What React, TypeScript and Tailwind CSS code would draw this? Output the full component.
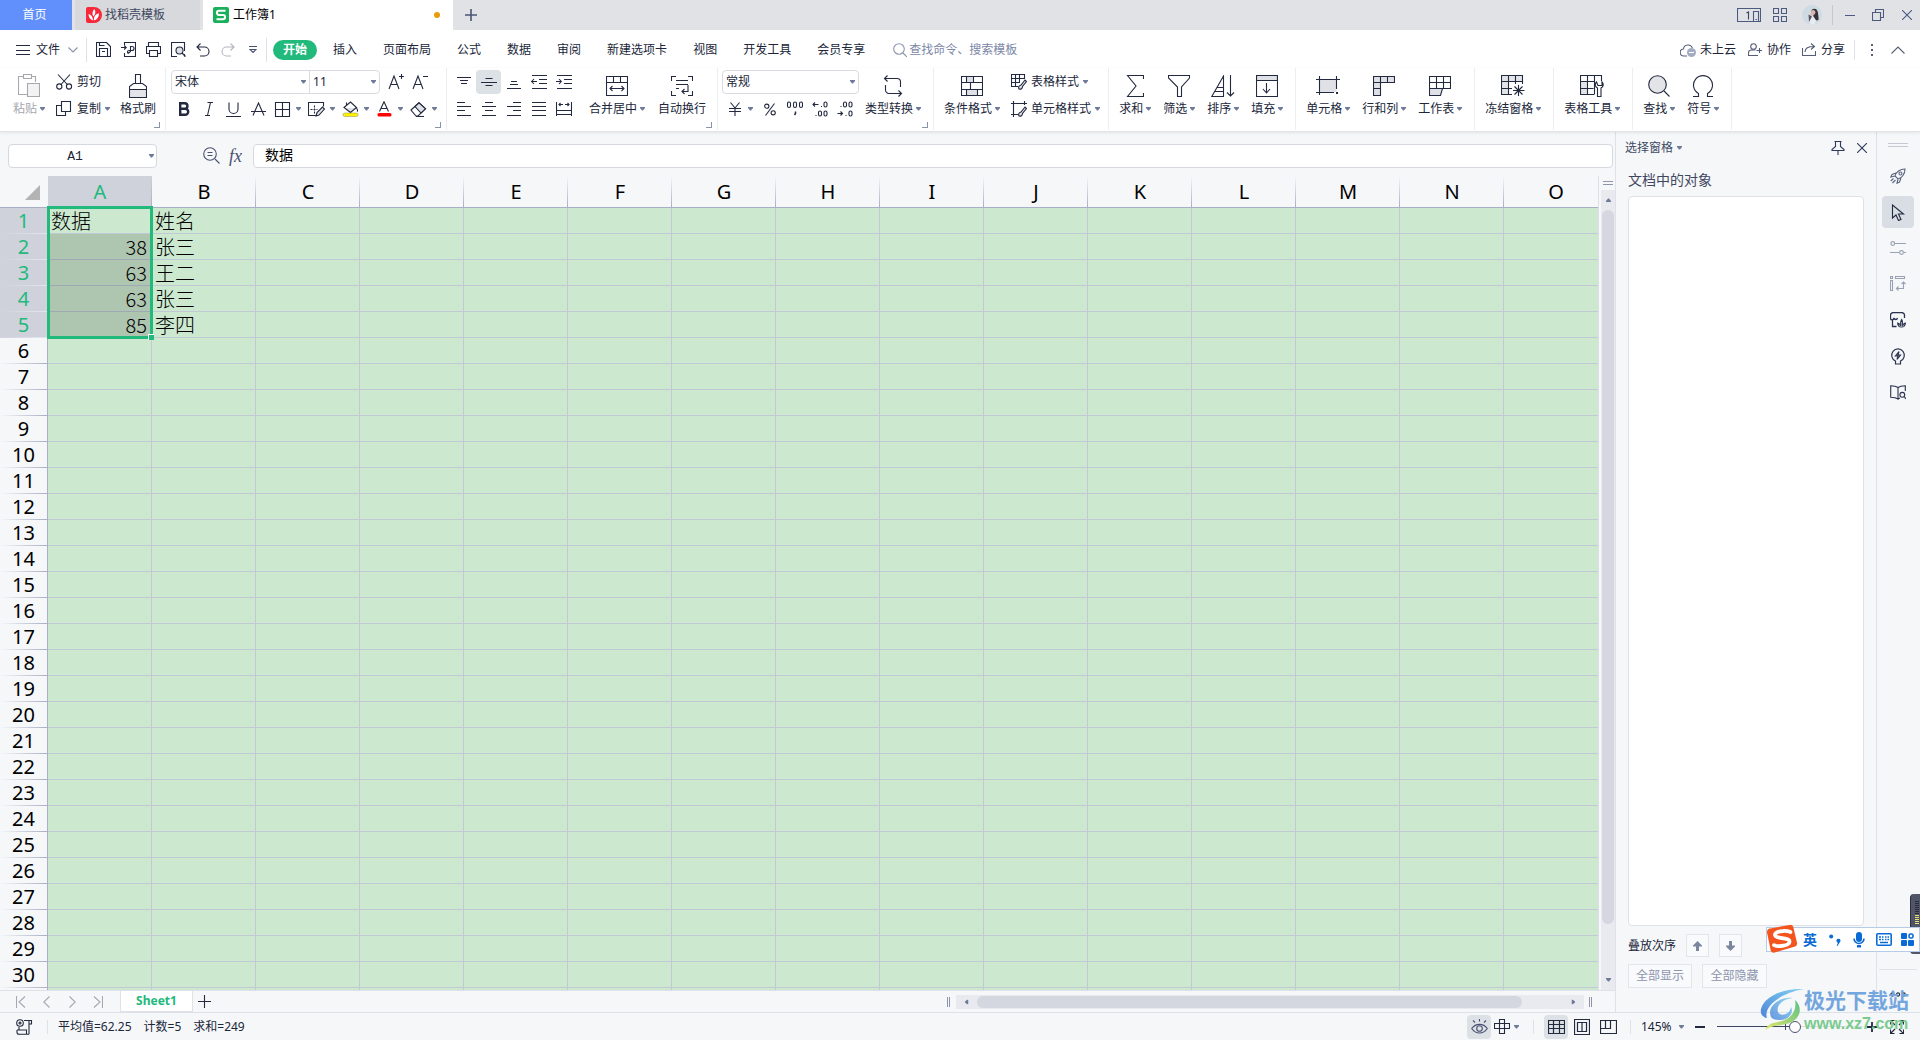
import React from "react";

type Kids = { children?: React.ReactNode };

function Ic({ w, h, children, c = "text-[#23293f]" }: Kids & { w: number; h: number; c?: string }) {
  return (
    <svg width={w} height={h} viewBox={`0 0 ${w} ${h}`} fill="none" stroke="currentColor" strokeWidth="1.1" className={`shrink-0 ${c}`} aria-hidden="true">
      {children}
    </svg>
  );
}

function Arrow() {
  return (
    <svg width="5" height="4" viewBox="0 0 5 4" className="shrink-0 text-[#6f7a99]" fill="currentColor" aria-hidden="true">
      <path d="M0 0h5v1L3 3.500H2L0 1z" />
    </svg>
  );
}

function Big({ icon, label, arrow = true }: { icon: React.ReactNode; label: string; arrow?: boolean }) {
  return (
    <button className="flex flex-col items-center px-[6px] pt-[6px]">
      <span className="flex h-6 items-center justify-center">{icon}</span>
      <span className="flex h-[22px] items-center gap-[3px] whitespace-nowrap">
        {label}
        {arrow && <Arrow />}
      </span>
    </button>
  );
}

function Small({ icon, label, arrow = true }: { icon: React.ReactNode; label: string; arrow?: boolean }) {
  return (
    <button className="flex h-6 items-center gap-1 whitespace-nowrap">
      {icon}
      <span className="flex items-center gap-1">
        {label}
        {arrow && <Arrow />}
      </span>
    </button>
  );
}

function Group({ children, launcher, className = "pl-1 pr-[6px]" }: Kids & { launcher?: boolean; className?: string }) {
  return (
    <div className={`relative flex h-[62px] shrink-0 border-r border-[#edeef1] ${className}`}>
      {children}
      {launcher && (
        <button aria-label="更多设置" className="absolute right-[5px] bottom-[2px] h-[6px] w-[6px] border-r border-b border-[#8a93ac]" />
      )}
    </div>
  );
}

function Tool({ label, children, active, className = "w-[25px]" }: Kids & { label: string; active?: boolean; className?: string }) {
  return (
    <button aria-label={label} className={`flex h-6 items-center justify-center rounded-sm ${active ? "bg-[#dce1e6]" : ""} ${className}`}>
      {children}
    </button>
  );
}

function DropTool({ label, children }: Kids & { label: string }) {
  return (
    <button aria-label={label} className="flex h-6 w-[34px] items-center gap-[5px] pl-[3px]">
      {children}
      <Arrow />
    </button>
  );
}

function Pick({ label, value, className }: { label: string; value: string; className: string }) {
  return (
    <span className={`relative flex items-center ${className}`}>
      <select aria-label={label} defaultValue={value} className="h-full w-full appearance-none bg-transparent pl-[3px] outline-none">
        <option>{value}</option>
      </select>
      <span className="pointer-events-none absolute right-[3px] flex">
        <Arrow />
      </span>
    </span>
  );
}

function TitleBar() {
  return (
    <header className="flex h-[30px] shrink-0 items-stretch bg-[#e1e2e6]">
      <button className="w-[72px] bg-[#618ffb] pr-[3px] text-white">首页</button>
      <button className="ml-[3px] flex w-[125px] items-center gap-[3px] bg-[#d7d9dc] pl-[11px] text-[#3f4660]">
        <svg width="16" height="16" viewBox="0 0 16 16" aria-hidden="true">
          <path d="M2 0h6a8 8 0 1 1 0 16H2a2 2 0 0 1-2-2V2a2 2 0 0 1 2-2z" fill="#f8283a" />
          <path d="M7.200 13.500C4 12.500 2.500 10 2.600 7c2.400.6 4.200 2.600 4.600 6.500zM7.300 9.500C5.800 7 6.300 4.200 8.300 2c1.700 2.500 1.500 5.200-1 7.500zM7.900 13.500c-.2-3.800 1.300-6.300 5-7.300.3 3.500-1.500 6.300-5 7.300z" fill="#fff" />
        </svg>
        找稻壳模板
      </button>
      <div className="ml-[3px] flex w-[250px] items-center gap-1 bg-white pl-[10px] text-black">
        <svg width="16" height="16" viewBox="0 0 16 16" aria-hidden="true">
          <rect width="16" height="16" rx="2" fill="#18b058" />
          <path d="M12.500 3.700H6a2.100 2.100 0 0 0 0 4.200h4a2.100 2.100 0 0 1 0 4.300H3.500" fill="none" stroke="#fff" strokeWidth="2" />
        </svg>
        <span className="flex-1">工作簿1</span>
        <span className="mr-[13px] h-[6px] w-[6px] rounded-full bg-[#e89b0c]" />
      </div>
      <button aria-label="新建标签" className="ml-3 flex items-center">
        <Ic w={12} h={12} c="text-[#4a5674]">
          <path d="M6 0v12M0 6h12" strokeWidth="1.600" />
        </Ic>
      </button>
      <div className="ml-auto flex items-center text-[#4c5a80]">
        <button aria-label="窗口排列" className="mr-3 flex">
          <Ic w={24} h={15} c="text-[#4c5a80]">
            <path d="M.5.5h23v13H.5zM16.500 13.500v-10h5v10" />
            <path d="M9.500 5l2-1v7.500" stroke="#3d4560" />
            <path d="M18.500 11.500h1.500" />
          </Ic>
        </button>
        <button aria-label="应用" className="mr-[15px] flex">
          <Ic w={14} h={14} c="text-[#4c5a80]">
            <path d="M.5.5h5v5h-5zM8.500.5h5v5h-5zM.5 8.500h5v5h-5zM8.500 8.500h5v5h-5z" />
          </Ic>
        </button>
        <button aria-label="账号" className="mr-[10px] flex">
          <svg width="20" height="20" viewBox="0 0 20 20" aria-hidden="true">
            <circle cx="10" cy="10" r="10" fill="#cfdbe2" />
            <path d="M9.500 5c3-2.500 6-1 6.500 3 .3 3 .8 5 .5 7l-2.500.5-4-6z" fill="#37313a" />
            <path d="M9.500 5.500c2-1.500 4 0 4 2.500l-2.500 3-2.500-1z" fill="#dcb5ac" />
            <path d="M7 15.500l3.500-5 3.500 5-1.500 4h-4.500z" fill="#e6ecef" />
            <path d="M6.500 9.500l3.500 2L7 17z" fill="#5a5560" />
          </svg>
        </button>
        <span className="h-5 w-px bg-[#c4c8d2]" />
        <button aria-label="最小化" className="ml-3 flex w-[10px]">
          <span className="h-px w-[10px] bg-[#4c5a80]" />
        </button>
        <button aria-label="还原" className="ml-[17px] flex">
          <Ic w={12} h={12} c="text-[#4c5a80]">
            <path d="M.5 3.500h8v8h-8zM3.500 3.500v-3h8v8h-3" />
          </Ic>
        </button>
        <button aria-label="关闭" className="mr-2 ml-[18px] flex">
          <Ic w={10} h={10} c="text-[#4c5a80]">
            <path d="M0 0l10 10M10 0L0 10" />
          </Ic>
        </button>
      </div>
    </header>
  );
}

const tabs = ["插入", "页面布局", "公式", "数据", "审阅", "新建选项卡", "视图", "开发工具", "会员专享"];

function MenuBar() {
  return (
    <nav className="flex h-[38px] shrink-0 items-center pt-px whitespace-nowrap">
      <button className="ml-4 flex items-center gap-[6px]">
        <Ic w={14} h={10}>
          <path d="M0 .5h14M0 5.500h14M0 9.500h14" />
        </Ic>
        文件
        <Ic w={10} h={6} c="ml-[2px] text-[#8d93a6]">
          <path d="M.5.5L5 5 9.500.5" />
        </Ic>
      </button>
      <span className="ml-2 h-6 w-px bg-[#dfe1e6]" />
      <div className="ml-[9px] flex items-center gap-[10px]">
        <button aria-label="保存">
          <Ic w={15} h={15}>
            <path d="M.5.5h10l4 4v10H.5zM3.500 14.500v-8h8v8M3.500.5v3h5M6 9.500h3" />
          </Ic>
        </button>
        <button aria-label="输出为PDF">
          <Ic w={15} h={15}>
            <path d="M3.500 3V.5h11v14h-11V11M0 5.500h5M3.200 3.500l2 2-2 2" />
            <path d="M7 11.500l2.500-2v-5h1.500a1.800 1.800 0 0 1 0 4H8c-2 0-2 2.500-.5 3" />
          </Ic>
        </button>
        <button aria-label="打印">
          <Ic w={15} h={15}>
            <path d="M2.500 4.500v-4h10v4M3 11.500H.5v-7h14v7H12M3.500 8.500h8v6h-8z" />
          </Ic>
        </button>
        <button aria-label="打印预览">
          <Ic w={15} h={15}>
            <path d="M6 14.500H.5V.5h13V9M13.500 12v2.500" />
            <circle cx="8.500" cy="8.500" r="3.500" fill="#dfe1e6" />
            <path d="M11 11l3.500 3.500" />
          </Ic>
        </button>
        <button aria-label="撤销">
          <Ic w={14} h={14}>
            <path d="M4.500.5L1 4l3.500 3.500M1 4h7.500a4.500 4.500 0 0 1 0 9H4" />
          </Ic>
        </button>
        <button aria-label="恢复" className="ml-px">
          <Ic w={14} h={14} c="text-[#b4b7c0]">
            <path d="M9.500.5L13 4 9.500 7.500M13 4H5.500a4.500 4.500 0 0 0 0 9H10" />
          </Ic>
        </button>
        <button aria-label="自定义快速访问工具栏" className="ml-1">
          <Ic w={8} h={8} c="text-[#4a5170]">
            <path d="M0 .5h8M1 3.500h6l-3 3z" />
          </Ic>
        </button>
      </div>
      <span className="ml-[9px] h-6 w-px bg-[#dfe1e6]" />
      <button className="ml-[6px] mr-[3px] h-5 rounded-full bg-[#22b97c] px-[10px] font-bold text-white">开始</button>
      {tabs.map((t) => (
        <button key={t} className="px-[13px]">
          {t}
        </button>
      ))}
      <label className="ml-[15px] flex items-center gap-[2px] text-[#7c86a6]">
        <Ic w={14} h={14} c="text-[#8d95ad]">
          <circle cx="6" cy="6" r="5.300" />
          <path d="M10 10l4 4" />
        </Ic>
        <input aria-label="查找命令、搜索模板" placeholder="查找命令、搜索模板" className="w-[120px] bg-transparent outline-none placeholder:text-[#7c86a6]" />
      </label>
      <div className="ml-auto flex items-center">
        <button className="flex items-center gap-1">
          <Ic w={16} h={14} c="text-[#565d75]">
            <path d="M7 13H4a3.500 3.500 0 0 1-.5-7 4.500 4.500 0 0 1 8.800-.8" />
            <circle cx="11.500" cy="9.500" r="4.500" fill="#a3abc2" stroke="none" />
            <path d="M9 9.500h5" stroke="#fff" />
          </Ic>
          未上云
        </button>
        <button className="ml-3 flex items-center gap-[5px]">
          <Ic w={14} h={13} c="text-[#565d75]">
            <circle cx="5.500" cy="3.500" r="2.800" />
            <path d="M10 12.500H.5V10a3 3 0 0 1 3-3h4M8.500 7.500h5.500M11.500 5v5" />
          </Ic>
          协作
        </button>
        <button className="ml-[11px] flex items-center gap-[5px]">
          <Ic w={14} h={13} c="text-[#565d75]">
            <path d="M.5 5v7.500h13V8M3 9c0-4 3-5.500 9-5.500M9 .5l3.500 3L9 6.500" />
          </Ic>
          分享
        </button>
        <span className="ml-[9px] h-5 w-px bg-[#dfe1e6]" />
        <button aria-label="更多" className="ml-4 flex">
          <svg width="2" height="12" fill="#565d75" aria-hidden="true">
            <path d="M0 0h2v2H0zM0 5h2v2H0zM0 10h2v2H0z" />
          </svg>
        </button>
        <button aria-label="收起功能区" className="mr-[15px] ml-[18px] flex">
          <Ic w={14} h={8} c="text-[#565d75]">
            <path d="M.5 7.500L7 1l6.500 6.500" />
          </Ic>
        </button>
      </div>
    </nav>
  );
}

function Lines({ d }: { d: string }) {
  return (
    <Ic w={16} h={14}>
      <path d={d} />
    </Ic>
  );
}

function Ribbon() {
  return (
    <div className="z-10 flex h-16 shrink-0 overflow-hidden border-b border-[#e2e4e8] bg-white shadow-[0_1px_3px_rgba(0,0,0,0.08)]">
      <Group launcher className="pr-[9px] pl-[7px]">
        <div className="text-[#a6a8ae]">
          <Big
            label="粘贴"
            icon={
              <Ic w={22} h={24} c="text-[#a6a8ae]">
                <path d="M5 2.500H.5v18H9M14 2.500h3.500V8M5.500.5h8v4h-8z" />
                <path d="M9.500 9.500h12v13h-12z" fill="#f3f3f4" />
              </Ic>
            }
          />
        </div>
        <div className="ml-[5px] flex flex-col gap-[3px] pt-[2px]">
          <Small
            arrow={false}
            label="剪切"
            icon={
              <Ic w={17} h={16}>
                <circle cx="3.300" cy="12.500" r="2.600" />
                <circle cx="13" cy="12.500" r="2.600" />
                <path d="M2 .5l9.300 10M14 .5L5 10.500" />
              </Ic>
            }
          />
          <Small
            label="复制"
            icon={
              <Ic w={17} h={16}>
                <path d="M5.500.5h9v10h-9zM5.500 4.500h-5v10h9v-4" />
              </Ic>
            }
          />
        </div>
        <div className="ml-1 -mr-[6px]">
          <Big
            arrow={false}
            label="格式刷"
            icon={
              <Ic w={18} h={24}>
                <path d="M6.500 9.500v-9h5v9M.5 15.500v-3l4-3h9l4 3v3" />
                <path d="M.5 15.500h17v8H.5z" fill="#e2e4e8" />
              </Ic>
            }
          />
        </div>
      </Group>

      <Group launcher className="pr-[5px] pl-[5px]">
        <div className="flex flex-col gap-[3px] pt-[2px]">
          <div className="flex">
            <div className="flex h-6 rounded-sm border border-[#d9dbe0]">
              <Pick label="字体" value="宋体" className="w-[138px] border-r border-[#d9dbe0]" />
              <Pick label="字号" value="11" className="w-[69px]" />
            </div>
            <Tool label="增大字号" className="ml-1 w-6">
              <Ic w={16} h={16}>
                <path d="M1 15L6 2l5 13M2.800 10.500h6.500M13.500 0v5M11 2.500h5" />
              </Ic>
            </Tool>
            <Tool label="减小字号" className="w-6">
              <Ic w={16} h={16}>
                <path d="M1 15L6 2l5 13M2.800 10.500h6.500M11 2.500h5" />
              </Ic>
            </Tool>
          </div>
          <div className="flex">
            <Tool label="加粗">
              <Ic w={12} h={14}>
                <path d="M2.200 1.200h4.500a2.700 2.700 0 0 1 0 5.500H2.200zM2.200 6.700h5a3 3 0 0 1 0 6H2.200z" strokeWidth="2.400" />
              </Ic>
            </Tool>
            <Tool label="倾斜">
              <Ic w={10} h={14}>
                <path d="M3.500.5H9M1 13.500h5M6.500.5l-3 13" />
              </Ic>
            </Tool>
            <Tool label="下划线">
              <Ic w={15} h={15}>
                <path d="M3 .5V7a4.500 4.500 0 0 0 9 0V.5M0 14.500h15" />
              </Ic>
            </Tool>
            <Tool label="删除线">
              <Ic w={15} h={14}>
                <path d="M2 13.500L7.500 1 13 13.500M0 9.500h15" />
              </Ic>
            </Tool>
            <DropTool label="边框">
              <Ic w={17} h={15}>
                <path d="M1.500.5h14v14h-14zM8.500.5v14M1.500 7.500h14" />
              </Ic>
            </DropTool>
            <DropTool label="绘图边框">
              <Ic w={17} h={15}>
                <path d="M8 13.500H.5V.5h15v4" />
                <path d="M2.500 7.500h7M6.500 3.500v8" strokeDasharray="2 1" />
                <path d="M8 14l1-3.500L14.500 5l2 2-5.500 6z" fill="#dfe1e6" />
              </Ic>
            </DropTool>
            <DropTool label="填充颜色">
              <Ic w={17} h={16}>
                <path d="M3 7h11l-5.500 4.300z" fill="#dfe1e6" stroke="none" />
                <path d="M2 6.500L8.500 1l6 5.500-6 5zM4.500 4V1.500M14.500 7c1 1.500 1.500 3 .5 3.500" />
                <rect x="1" y="12" width="15" height="3.500" rx="1.700" fill="#fff200" stroke="#8a8a5a" strokeWidth=".5" />
              </Ic>
            </DropTool>
            <DropTool label="字体颜色">
              <Ic w={17} h={16}>
                <path d="M3.500 10.500L8 .8l4.500 9.700M5 7.500h6" />
                <rect x="1.500" y="12" width="14" height="3.500" rx="1.500" fill="#f00" stroke="none" />
              </Ic>
            </DropTool>
            <DropTool label="清除">
              <Ic w={17} h={15}>
                <path d="M1 8L9 .8l6.500 6L8 14H6z" />
                <path d="M5 4.500L9 .8l6.500 6L11 11z" fill="#dfe1e6" />
                <path d="M6 14.500h8" />
              </Ic>
            </DropTool>
          </div>
        </div>
      </Group>

      <Group launcher className="pr-[5px] pl-1">
        <div className="flex flex-col gap-[3px] pt-[2px]">
          <div className="flex">
            <Tool label="顶端对齐"><Lines d="M1 2.500h14M4 5.500h8M5 8.500h6" /></Tool>
            <Tool label="垂直居中" active><Lines d="M4.500 3.500h7M0 7.500h16M4.500 10.500h7" /></Tool>
            <Tool label="底端对齐"><Lines d="M5 6.500h6M4 9.500h8M1 13.500h14" /></Tool>
            <Tool label="减少缩进量"><Lines d="M1 .5h15M8 4.500h8M8 8.500h8M1 13.500h15M0 6.500h6M3 4L.7 6.500 3 9" /></Tool>
            <Tool label="增加缩进量"><Lines d="M1 .5h15M8 4.500h8M8 8.500h8M1 13.500h15M0 6.500h5.500M3 4l2.300 2.500L3 9" /></Tool>
          </div>
          <div className="flex">
            <Tool label="左对齐"><Lines d="M1 .5h8M1 4.500h14M1 8.500h8M1 13.500h14" /></Tool>
            <Tool label="居中"><Lines d="M4 .5h8M1 4.500h14M4 8.500h8M1 13.500h14" /></Tool>
            <Tool label="右对齐"><Lines d="M7 .5h8M1 4.500h14M7 8.500h8M1 13.500h14" /></Tool>
            <Tool label="两端对齐"><Lines d="M1 .5h14M1 4.500h14M1 8.500h14M1 13.500h14" /></Tool>
            <Tool label="分散对齐"><Lines d="M.5 0v14M15.500 0v14M3 2.500h4M9 2.500h4M4.500 1L3 2.500 4.500 4M11.500 1L13 2.500 11.500 4M1 8.500h14M1 12.500h14" /></Tool>
          </div>
        </div>
        <div className="ml-[7px] flex gap-px">
          <Big
            label="合并居中"
            icon={
              <Ic w={22} h={20}>
                <path d="M.5.5h21v19H.5zM.5 6.500h21M7.500.5v6M14.500.5v6M4 12.500h14M6.500 10L4 12.500 6.500 15M15.500 10l2.500 2.500-2.500 2.500" />
              </Ic>
            }
          />
          <Big
            arrow={false}
            label="自动换行"
            icon={
              <Ic w={22} h={20}>
                <path d="M5 .5H.5V5M17 .5h4.500V5M.5 15v4.500H5M21.500 15v4.500H17M5 4.500h12M5 8.500h12M5 12.500h3M17 9v6.500h-6M13.500 13L11 15.500l2.500 2.500" />
              </Ic>
            }
          />
        </div>
      </Group>

      <Group launcher className="pr-[6px] pl-1">
        <div className="flex flex-col gap-[3px] pt-[2px]">
          <div className="flex h-6 w-[137px] rounded-sm border border-[#d9dbe0]">
            <Pick label="数字格式" value="常规" className="flex-1" />
          </div>
          <div className="flex pl-[6px]">
            <button aria-label="货币" className="flex h-6 items-center gap-[6px]">
              <Ic w={14} h={14}>
                <path d="M2.500.5L7 6l4.500-5.500M1 6.500h12M1 9.500h12M7 6v8" />
              </Ic>
              <Arrow />
            </button>
            <Tool label="百分比" className="ml-1 w-[25px]">
              <Ic w={12} h={13}>
                <circle cx="2.800" cy="3.200" r="2.100" />
                <circle cx="9.200" cy="9.800" r="2.100" />
                <path d="M10.500.5L1.500 12.500" />
              </Ic>
            </Tool>
            <Tool label="千位分隔">
              <Ic w={16} h={16}>
                <rect x=".5" y="1" width="3" height="5.500" rx="1.500" />
                <rect x="6.500" y="1" width="3" height="5.500" rx="1.500" />
                <rect x="12.500" y="1" width="3" height="5.500" rx="1.500" />
                <path d="M8.500 10.500v2l-1 1.500" strokeWidth="1.500" />
              </Ic>
            </Tool>
            <Tool label="增加小数位数">
              <Ic w={16} h={16}>
                <rect x="12" y="1" width="3" height="5" rx="1.500" />
                <rect x="6.500" y="10" width="3" height="5" rx="1.500" />
                <rect x="12" y="10" width="3" height="5" rx="1.500" />
                <path d="M6.500 3.500H.8M3 1.500l-2 2 2 2M9 5.500h1M3.500 14.500h1" />
              </Ic>
            </Tool>
            <Tool label="减少小数位数">
              <Ic w={16} h={16}>
                <rect x="6.500" y="1" width="3" height="5" rx="1.500" />
                <rect x="12" y="1" width="3" height="5" rx="1.500" />
                <rect x="12" y="10" width="3" height="5" rx="1.500" />
                <path d="M.5 12.500h5M3.500 10.500l2 2-2 2M3.500 5.500h1M8.500 14.500h1" />
              </Ic>
            </Tool>
          </div>
        </div>
        <Big
          label="类型转换"
          icon={
            <Ic w={20} h={22}>
              <path d="M4.500.5l-3 3 3 3M1.500 3.500H14a3.500 3.500 0 0 1 3.500 3.500v5M15.500 15.500l3 3-3 3M18.500 18.500H6A3.500 3.500 0 0 1 2.500 15v-5" />
            </Ic>
          }
        />
      </Group>

      <Group className="pr-[8px] pl-1">
        <Big
          label="条件格式"
          icon={
            <Ic w={22} h={20}>
              <path d="M6 1h7v6H6zM6 13h10v6H6z" fill="#dfe1e6" stroke="none" />
              <path d="M.5.5h21v19H.5zM.5 6.500h21M.5 13.500h21M5.500.5v6M12.500.5v6M9.500 6.500v7M5.500 13.500v6M16.500 13.500v6" />
            </Ic>
          }
        />
        <div className="ml-[5px] flex flex-col gap-[3px] pt-[2px]">
          <Small
            label="表格样式"
            icon={
              <Ic w={16} h={16}>
                <path d="M7 12.500H.5V.5h13V5M.5 4.500h13M.5 8.500H9M4.500.5v12M8.500.5V8" />
                <path d="M8 15c-1-2 0-3.500 2-4l4-5 1.500 1.500-4 5c0 2-1.500 3-3.500 2.500z" fill="#dfe1e6" />
              </Ic>
            }
          />
          <Small
            label="单元格样式"
            icon={
              <Ic w={16} h={16}>
                <path d="M2.500 0v16M0 2.500h16M0 13.500h7M13.500 0v4" />
                <path d="M8 15c-1-2 0-3.500 2-4l4-5 1.500 1.500-4 5c0 2-1.500 3-3.500 2.500z" fill="#dfe1e6" />
              </Ic>
            }
          />
        </div>
      </Group>

      <Group>
        <Big label="求和" icon={<Ic w={18} h={22}><path d="M17.500 4V.5H1.500L10 11 1.500 21.500h16V18" /></Ic>} />
        <Big label="筛选" icon={<Ic w={22} h={22}><path d="M.5.5h21V3l-8 9v9.500h-4V12l-9-9z" /></Ic>} />
        <Big
          label="排序"
          icon={
            <Ic w={24} h={22}>
              <path d="M.8 21.500L12.500 1v20.500zM6.500 12.500h6M3.500 16.500h9" />
              <path d="M19.500 0v20.500M16 17.500l3.500 3.500 3.500-3.500" />
            </Ic>
          }
        />
        <Big
          label="填充"
          icon={
            <Ic w={22} h={22}>
              <path d="M.5.5h21v5H.5z" fill="#dfe1e6" />
              <path d="M.5.5h21v21H.5zM10.500 8v10M7 14l3.500 4 3.500-4" />
            </Ic>
          }
        />
      </Group>

      <Group>
        <Big
          label="单元格"
          icon={
            <Ic w={24} h={20}>
              <path d="M3.500 4h17v12h-17z" fill="#dfe1e6" stroke="none" />
              <path d="M3.500 0v19M0 3.500h24M20.500 0v13M0 16.500h18" />
              <path d="M20 16h2v2h-2z" fill="currentColor" stroke="none" />
            </Ic>
          }
        />
        <Big
          label="行和列"
          icon={
            <Ic w={22} h={20}>
              <path d="M.5.5h21v6h-14v13h-7z" fill="#dfe1e6" />
              <path d="M7.500.5v6M14.500.5v6M.5 6.500h7M.5 12.500h7" />
            </Ic>
          }
        />
        <Big
          label="工作表"
          icon={
            <Ic w={22} h={20}>
              <path d="M.5 12.500h13l-2 7H.5z" fill="#dfe1e6" />
              <path d="M.5.5h21v12H.5zM.5 6.500h21M7.500.5v12M14.500.5v12" />
            </Ic>
          }
        />
      </Group>

      <Group>
        <Big
          label="冻结窗格"
          icon={
            <Ic w={24} h={22}>
              <path d="M.5 1h21v6h-14v12.500h-7z" fill="#e2e4e8" stroke="none" />
              <path d="M21.500 9V.5H.5v19H11M.5 6.500h21M.5 13.500H11M7.500.5v19M14.500.5V9M17.500 10v11M12 15.500h11.500M13.500 11.500l8 8M21.500 11.500l-8 8" />
            </Ic>
          }
        />
      </Group>
      <Group>
        <Big
          label="表格工具"
          icon={
            <Ic w={24} h={22}>
              <path d="M1 7h6v12H1z" fill="#e2e4e8" stroke="none" />
              <path d="M21.500 6V.5H.5v19H14M.5 6.500H15M.5 13.500h13M7.500.5v19M14.500.5v19" />
              <path d="M16.500 7c-2 2-1.500 5 1 6v8.500h3.500V13c2.500-1 3-4 1-6v3.500h-4z" fill="#fff" />
            </Ic>
          }
        />
      </Group>
      <Group>
        <Big
          label="查找"
          icon={
            <Ic w={22} h={22}>
              <circle cx="9.500" cy="9.500" r="8.800" fill="#e2e4e8" />
              <path d="M16 16l5.500 5.500" />
            </Ic>
          }
        />
        <Big label="符号" icon={<Ic w={22} h={22}><path d="M1 21.500h5.500v-3a9.500 9.500 0 1 1 9 0v3H21" /></Ic>} />
      </Group>
    </div>
  );
}

function FormulaBar() {
  return (
    <div className="flex h-11 shrink-0 items-center pt-[3px] pr-[2px]">
      <div className="ml-2 flex h-6 w-[149px] items-center rounded-sm border border-[#d5d8de] bg-white pr-[2px]">
        <input aria-label="名称框" defaultValue="A1" className="w-full min-w-0 flex-1 pt-[2px] pr-2 text-center font-['Liberation_Mono','Noto_Sans_CJK_SC',monospace] text-[13px] outline-none" />
        <Arrow />
      </div>
      <button aria-label="浏览公式结果" className="ml-[46px]">
        <Ic w={17} h={17} c="text-[#4a5170]">
          <circle cx="7" cy="7" r="6.300" />
          <path d="M12 12l4.500 4.500M4.500 5.500h5M4.500 8.500h5" />
        </Ic>
      </button>
      <button aria-label="插入函数" className="ml-[9px] w-4 text-left font-['Liberation_Serif',serif] text-[18px] text-[#4a5170] italic">fx</button>
      <input aria-label="编辑栏" defaultValue="数据" className="ml-2 h-6 min-w-0 flex-1 rounded-sm border border-[#d5d8de] bg-white pb-[4px] pl-[11px] text-[14px] text-black outline-none" />
    </div>
  );
}

const cols = "ABCDEFGHIJKLMNO".split("");
const data: Record<number, [string, string]> = {
  1: ["数据", "姓名"],
  2: ["38", "张三"],
  3: ["63", "王二"],
  4: ["63", "张三"],
  5: ["85", "李四"],
};

function cellClass(row: number, col: string) {
  if (col === "A" && row > 1 && row <= 5) return "border-[#9fa8b4] bg-[#aec5b0] text-right pr-1";
  return "border-[#c1c8d6] text-left pl-[3px]";
}

function Grid() {
  return (
    <div className="relative min-w-0 flex-1 overflow-hidden border-r border-[#dcdfe5]">
      <table className="w-[1608px] table-fixed border-separate border-spacing-0 text-[20px] leading-6 text-black">
        <thead>
          <tr className="h-8">
            <th className="w-12 border-b border-[#a9afc5] bg-[#f6f7f9] p-0 align-bottom">
              <svg width="15" height="15" viewBox="0 0 15 15" className="mb-[7px] ml-[25px]" aria-hidden="true">
                <path d="M15 0v15H0z" fill="#b3b3b3" />
              </svg>
            </th>
            {cols.map((c) => (
              <th
                key={c}
                className={`relative w-[104px] border-b border-[#a9afc5] p-0 font-normal after:absolute after:inset-y-0 after:right-0 after:w-px after:bg-linear-to-b after:from-transparent after:to-[#a9afc5] ${c === "A" ? "bg-[#cfd2da] text-[#22b97c]" : "bg-[#f6f7f9]"}`}
              >
                {c}
              </th>
            ))}
          </tr>
        </thead>
        <tbody className="bg-[#cce8cf]">
          {Array.from({ length: 31 }, (_, i) => i + 1).map((r) => (
            <tr key={r} className="h-[26px]">
              <th
                className={`relative h-[26px] border-r border-[#a9afc5] p-0 font-normal after:absolute after:inset-x-0 after:bottom-0 after:h-px after:bg-linear-to-r after:from-transparent ${r <= 5 ? "bg-[#cfd2da] text-[#22b97c] after:to-[#e4e6ec]" : "bg-[#f6f7f9] after:to-[#a9afc5]"}`}
              >
                {r <= 30 ? r : ""}
              </th>
              {cols.map((c, k) => (
                <td key={c} className={`h-[26px] border-r border-b p-0 font-['Noto_Sans_CJK_SC',sans-serif] leading-6 font-light ${cellClass(r, c)}`}>
                  {k < 2 && data[r] ? data[r][k] : ""}
                </td>
              ))}
            </tr>
          ))}
        </tbody>
      </table>
      <div className="pointer-events-none absolute top-[30px] left-[47px] h-[133px] w-[106px] border-[3px] border-[#22b97c]">
        <span className="absolute -right-[4px] -bottom-[4px] h-[6px] w-[6px] border-t border-l border-white bg-[#22b97c]" />
      </div>
    </div>
  );
}

function VScroll() {
  return (
    <div className="flex w-[16px] shrink-0 flex-col items-center pl-[2px]">
      <span className="mt-[5px] h-1 w-[10px] shrink-0 border-y border-[#8d95ad]" />
      <div className="mt-[5px] flex w-[14px] flex-1 flex-col items-center bg-[#e9eaef]">
        <button aria-label="向上滚动" className="flex h-5 rotate-180 items-center"><Arrow /></button>
        <div className="w-3 flex-1">
          <div className="h-[94%] rounded-full bg-[#d4d7df]" />
        </div>
        <button aria-label="向下滚动" className="flex h-5 items-center"><Arrow /></button>
      </div>
    </div>
  );
}

function SheetTabs() {
  return (
    <div className="flex h-[22px] shrink-0 items-center border-t border-[#dfe1e8]">
      <div className="flex w-[120px] items-center pl-4">
        <button aria-label="第一张工作表"><Ic w={10} h={12} c="text-[#a5a8b2]"><path d="M.5 0v12M9 .5L3 6l6 5.500" /></Ic></button>
        <button aria-label="上一张工作表" className="ml-[17px]"><Ic w={7} h={12} c="text-[#a5a8b2]"><path d="M6.500.5L.8 6l5.700 5.500" /></Ic></button>
        <button aria-label="下一张工作表" className="ml-[19px]"><Ic w={7} h={12} c="text-[#a5a8b2]"><path d="M.5.5L6.200 6 .5 11.500" /></Ic></button>
        <button aria-label="最后一张工作表" className="ml-[17px]"><Ic w={10} h={12} c="text-[#a5a8b2]"><path d="M9.500 0v12M1 .5L7 6l-6 5.500" /></Ic></button>
      </div>
      <button className="h-[21px] w-[73px] border-x border-b border-[#dfe1e8] bg-white font-bold text-[#22b97c]">Sheet1</button>
      <button aria-label="新建工作表" className="ml-[5px]"><Ic w={13} h={13}><path d="M6.500 0v13M0 6.500h13" /></Ic></button>
      <span className="ml-auto h-[10px] w-[3px] border-x border-[#8d95ad]" />
      <div className="ml-[6px] flex h-[14px] w-[38.9%] items-center bg-[#e9eaef]">
        <button aria-label="向左滚动" className="flex w-[21px] rotate-90 justify-center"><Arrow /></button>
        <div className="flex-1"><div className="h-3 w-[93%] rounded-full bg-[#d4d7df]" /></div>
        <button aria-label="向右滚动" className="flex w-[21px] -rotate-90 justify-center"><Arrow /></button>
      </div>
      <span className="mr-[23px] ml-[5px] h-[10px] w-[3px] border-x border-[#8d95ad]" />
    </div>
  );
}

function Pane() {
  return (
    <aside className="flex w-[262px] shrink-0 flex-col border-x border-[#dfe1e8]">
      <div className="flex h-[31px] items-center pl-[9px] text-[#3f4a63]">
        <button className="flex items-center gap-1">选择窗格<Arrow /></button>
        <button aria-label="固定" className="ml-auto">
          <Ic w={14} h={14} c="text-[#2e3a59]">
            <path d="M3.500.5h7M4.500.5v5L1 8.500v1h12v-1l-3.500-3v-5M7 9.500V14" />
          </Ic>
        </button>
        <button aria-label="关闭窗格" className="mr-[9px] ml-3">
          <Ic w={10} h={10} c="text-[#2e3a59]"><path d="M0 0l10 10M10 0L0 10" /></Ic>
        </button>
      </div>
      <h2 className="flex h-[33px] items-center pl-3 text-[14px] text-[#3f4660]">文档中的对象</h2>
      <div className="mr-3 ml-3 flex-1 rounded-sm border border-[#dfe1e6] bg-white" />
      <div className="mt-2 flex h-[23px] items-center pl-3">
        叠放次序
        <button aria-label="上移一层" className="ml-[10px] flex h-[23px] w-[23px] items-center justify-center border border-[#e3e5ea] bg-[#f9fafc]">
          <svg width="9" height="10" viewBox="0 0 9 10" fill="#7c869f" aria-hidden="true"><path d="M4.500 0L9 4.500v1H6V10H3V5.500H0v-1z" /></svg>
        </button>
        <button aria-label="下移一层" className="ml-[10px] flex h-[23px] w-[23px] items-center justify-center border border-[#e3e5ea] bg-[#f9fafc]">
          <svg width="9" height="10" viewBox="0 0 9 10" fill="#7c869f" aria-hidden="true"><path d="M4.500 10L9 5.500v-1H6V0H3v4.500H0v1z" /></svg>
        </button>
      </div>
      <div className="mt-[7px] mb-6 flex gap-[10px] pl-3 text-[#8d95ad]">
        <button className="h-6 w-16 border border-[#e3e5ea] bg-[#f9fafc]">全部显示</button>
        <button className="h-6 w-[65px] border border-[#e3e5ea] bg-[#f9fafc]">全部隐藏</button>
      </div>
    </aside>
  );
}

function SideBtn({ label, children, active }: Kids & { label: string; active?: boolean }) {
  return (
    <button aria-label={label} className={`flex h-8 w-8 items-center justify-center rounded-sm ${active ? "bg-[#d9dde4]" : ""}`}>
      {children}
    </button>
  );
}

function SideBar() {
  return (
    <aside className="flex w-[43px] shrink-0 flex-col items-center pr-px">
      <span className="mt-[11px] h-1 w-5 shrink-0 border-y border-[#c5c8d2]" />
      <div className="mt-[13px] flex flex-col gap-1">
        <SideBtn label="智能助手">
          <Ic w={16} h={16} c="text-[#5a6480]">
            <path d="M5 8c1-4 5-7 10-7 0 5-3 9-7 10zM6 5L2 6.500.8 9 5 8M11 10l-1.500 4L7 15.200 8 11M3.500 10.500L.8 13M5.500 12l-3 3" />
            <circle cx="10.500" cy="5.500" r="1.500" />
          </Ic>
        </SideBtn>
        <SideBtn label="选择" active>
          <Ic w={14} h={17}><path d="M1.500 1v13l3.500-3 2.500 5.500 2.500-1L7.500 10h5z" /></Ic>
        </SideBtn>
        <SideBtn label="属性">
          <Ic w={16} h={14} c="text-[#9aa1b5]">
            <circle cx="2.800" cy="2.500" r="1.900" /><circle cx="11.500" cy="11.500" r="1.900" />
            <path d="M5 2.500h11M0 11.500h9.500M13.500 11.500H16" />
          </Ic>
        </SideBtn>
        <SideBtn label="行列">
          <Ic w={16} h={16} c="text-[#9aa1b5]">
            <path d="M.5.5h2v2h-2zM5.500.5h9v2h-9zM.5 4.500h2v10h-2zM13.500 6v6.500h-7M11.500 8l2-2 2 2M8.500 10.500l-2 2 2 2" />
          </Ic>
        </SideBtn>
        <SideBtn label="素材">
          <Ic w={16} h={16} c="text-[#2b3350]">
            <path d="M6.500 14.500h-4V8M.5 7V4a3 3 0 0 1 3-3.500h8a3 3 0 0 1 3 3.500v2M.5 6c0 2.500 3 2.500 3.500 0 .5 2 3 2 3.500 0" strokeWidth="1.300" />
            <path d="M11.500 15.500c-3 0-4.500-2-4.500-5 1.500 0 2.300.5 3 1.500 0-2 .5-4 1.700-5.500 1.300 1.500 1.500 3.500 1.300 5.500.8-1 1.500-1.500 3-1.500 0 3-1.500 5-4.500 5z" fill="currentColor" stroke="none" />
            <path d="M11.600 10v5M9 12.500l1.500 2.500M14.200 12.500L12.700 15" stroke="#f6f7f9" strokeWidth=".6" />
          </Ic>
        </SideBtn>
        <SideBtn label="推荐">
          <Ic w={16} h={17} c="text-[#2b3350]">
            <path d="M5.500 13a6.300 6.300 0 1 1 5 0v3h-5zM9 3.500L5.500 8H8l-1 3.500L10.500 7H8z" strokeWidth="1.200" />
          </Ic>
        </SideBtn>
        <SideBtn label="帮助">
          <Ic w={16} h={15} c="text-[#2b3350]">
            <path d="M8 2.500C6 1 3 .8.7.8v11.500c2.500 0 5.300.2 7.300 1.700zM8 2.500c2-1.500 5-1.700 7.300-1.700V6M8 14c.5-.5 1-.7 2-1" />
            <circle cx="12.300" cy="9.800" r="2.400" /><path d="M14 11.500l2 2.500" />
          </Ic>
        </SideBtn>
      </div>
      <div className="mt-auto flex h-[43px] w-[38px] flex-col items-center border-t border-[#e0e2e8] pt-[22px]">
        <button aria-label="更多工具" className="flex">
          <Ic w={16} h={5}><circle cx="2.300" cy="2.500" r="1.600" /><circle cx="8" cy="2.500" r="1.600" /><circle cx="13.700" cy="2.500" r="1.600" /></Ic>
        </button>
      </div>
    </aside>
  );
}

function StatusBar() {
  return (
    <footer className="flex h-7 shrink-0 items-center border-t border-[#dfe1e8] whitespace-nowrap">
      <button aria-label="宏" className="ml-4">
        <Ic w={17} h={16}>
          <circle cx="4" cy="4" r="3.300" /><circle cx="4" cy="4" r="1" />
          <path d="M8 1.500h7.500V5H13M13 1.500v13.800M3 8v3M1 11h9.500v4.300M13 15.300H3a2 2 0 0 1-2-2V11" />
        </Ic>
      </button>
      <span className="ml-[14px] h-[14px] w-px bg-[#dfe1e6]" />
      <p className="ml-[10px] flex gap-3">
        <span>平均值=62.25</span>
        <span>计数=5</span>
        <span>求和=249</span>
      </p>
      <div className="ml-auto flex items-center">
        <Tool label="护眼模式" active className="w-6">
          <Ic w={17} h={16} c="text-[#4a5170]">
            <path d="M.7 9.500c4-5.500 11.600-5.500 15.600 0-4 6-11.600 6-15.600 0zM8.500 0v2.500M2 1.500l2 2M15 1.500l-2 2" />
            <circle cx="8.500" cy="9.500" r="2.800" />
          </Ic>
        </Tool>
        <button aria-label="阅读模式" className="ml-[3px] flex items-center gap-1">
          <Ic w={16} h={15}><path d="M5.500.5h5v14h-5zM.5 4.500h15v5H.5z" /></Ic>
          <Arrow />
        </button>
        <span className="mr-[10px] ml-[14px] h-[14px] w-px bg-[#dfe1e6]" />
        <Tool label="普通视图" active className="w-6">
          <Ic w={17} h={14}><path d="M.5.5h16v13H.5zM.5 4.500h16M.5 8.500h16M5.500.5v13M11.500.5v13" strokeWidth="1.200" /></Ic>
        </Tool>
        <button aria-label="页面布局视图" className="ml-[6px]">
          <Ic w={16} h={16}><path d="M.5.5h15v15H.5zM3.500 3.500h9v9h-9zM8 3.500v9" strokeWidth="1.200" /></Ic>
        </button>
        <button aria-label="分页预览" className="ml-[10px]">
          <Ic w={17} h={14}><path d="M.5.5h16v13H.5zM.5 8.500h10v-8M5.500.5v8" strokeWidth="1.200" /></Ic>
        </button>
        <span className="mr-[10px] ml-[13px] h-[14px] w-px bg-[#dfe1e6]" />
        <button className="flex w-[43px] items-center justify-between">145%<Arrow /></button>
        <button aria-label="缩小" className="ml-[11px] flex h-4 w-[10px] items-center"><span className="h-[2px] w-full bg-[#23293f]" /></button>
        <span className="relative ml-3 flex w-[146px] items-center">
          <span className="absolute left-[68px] h-[6px] w-px bg-[#3d4560]" />
          <input
            type="range"
            aria-label="缩放比例"
            defaultValue={54}
            className="relative h-3 w-full appearance-none bg-transparent bg-[linear-gradient(to_right,#3d4560_54%,#dcdfe6_54%)] bg-[length:100%_1px] bg-center bg-no-repeat [&::-webkit-slider-thumb]:h-3 [&::-webkit-slider-thumb]:w-3 [&::-webkit-slider-thumb]:appearance-none [&::-webkit-slider-thumb]:rounded-full [&::-webkit-slider-thumb]:border [&::-webkit-slider-thumb]:border-[#4a5170] [&::-webkit-slider-thumb]:bg-white"
          />
        </span>
        <button aria-label="放大" className="ml-1"><Ic w={10} h={10}><path d="M5 0v10M0 5h10" strokeWidth="1.800" /></Ic></button>
        <button aria-label="全屏" className="mr-4 ml-[13px]">
          <Ic w={14} h={14}><path d="M4.500.5h-4v4M9.500.5h4v4M.5 9.500v4h4M13.500 9.500v4h-4M1 1l4 4M13 1L9 5M1 13l4-4M13 13L9 9" strokeWidth="1.200" /></Ic>
        </button>
      </div>
    </footer>
  );
}

function ImeBar() {
  return (
    <>
      <div className="absolute right-0 bottom-[86px] z-10 flex h-[60px] w-[10px] flex-col items-center gap-px rounded-l-sm border-l border-[#2d303c] bg-[#50556a] pt-[7px]">
        {Array.from({ length: 12 }, (_, i) => (
          <span key={i} className={`ml-[2px] h-px w-1 shrink-0 ${i < 7 ? "bg-[#2a2d38]" : "bg-[#e8e06a]"}`} />
        ))}
      </div>
      <div className="absolute right-0 bottom-[88px] z-20 flex h-[25px] items-center border border-[#b5cbe6] bg-white pr-[5px] pl-8 text-[#0b6bd6]">
        <svg width="32" height="30" viewBox="0 0 34 32" className="absolute -top-1 -left-px" aria-hidden="true">
          <path d="M3 5L25 1q3-.5 4 2l4 17q.5 3-2 4L9 30.500q-3 .5-4-2L1 9q-.3-3 2-4z" fill="#f4551f" />
          <path d="M26 8.500C20 6 9 8 9.500 12s15 2 15.500 6.500S13 25 8.500 22.500" fill="none" stroke="#fff" strokeWidth="4" strokeLinecap="round" />
        </svg>
        <button className="ml-1 text-[14px] font-bold">英</button>
        <button aria-label="中英文标点" className="ml-3">
          <svg width="12" height="12" viewBox="0 0 12 12" fill="#0b6bd6" aria-hidden="true"><circle cx="2.200" cy="2.500" r="2" /><path d="M7.500 6a2 2 0 1 1 3.800 1.500L8.500 12l-.8-.5 1.200-2.500C8 8.500 7.300 7.500 7.500 6z" /></svg>
        </button>
        <button aria-label="语音输入" className="ml-3">
          <svg width="12" height="16" viewBox="0 0 12 16" fill="#0b6bd6" aria-hidden="true"><rect x="3" width="6" height="10" rx="3" /><path d="M1 6.500a5 5 0 0 0 10 0" fill="none" stroke="#0b6bd6" strokeWidth="1.600" /><path d="M4 13h4v2.500H4z" /></svg>
        </button>
        <button aria-label="软键盘" className="ml-[11px]">
          <svg width="16" height="13" viewBox="0 0 16 13" fill="none" stroke="#0b6bd6" aria-hidden="true"><rect x=".8" y=".8" width="14.400" height="11.400" rx="1" strokeWidth="1.600" /><path d="M3 4h2M6 4h1.500M9 4h1.500M11.500 4H13M3 6.500h2M6 6.500h1.500M9 6.500h1.500M11.500 6.500H13M4 9.500h8" strokeWidth="1.500" /></svg>
        </button>
        <button aria-label="工具箱" className="ml-[9px]">
          <svg width="13" height="13" viewBox="0 0 13 13" fill="#0b6bd6" aria-hidden="true"><rect width="6" height="6" rx="1" /><rect y="7" width="6" height="6" rx="1" /><rect x="7" y="7" width="6" height="6" rx="1" /><rect x="8" y="1" width="4" height="4" rx="1.500" fill="none" stroke="#0b6bd6" strokeWidth="1.600" /></svg>
        </button>
      </div>
      <div className="pointer-events-none absolute right-[11px] bottom-[7px] z-20 flex items-center">
        <svg width="44" height="44" viewBox="0 0 44 44" aria-hidden="true">
          <defs>
            <linearGradient id="swirlBlue" x1="0" y1="1" x2="1" y2="0"><stop offset="0" stopColor="#4f86d8" /><stop offset="1" stopColor="#7fd0f2" /></linearGradient>
            <linearGradient id="swirlGreen" x1="0" y1="1" x2="1" y2="0"><stop offset="0" stopColor="#e2e86a" /><stop offset="1" stopColor="#58bf84" /></linearGradient>
          </defs>
          <path d="M44 2C26 1 5 8 1 22c-1 5 1 8 6 9C3 20 20 6 44 2z" fill="url(#swirlBlue)" />
          <path d="M11 30C6 18 22 9 33 11c-10 1-17 7-15 14 2 5 12 3 13-5 4 7-5 14-12 13-4 0-7-1-8-3z" fill="url(#swirlBlue)" opacity=".85" />
          <path d="M35 13c9 8 5 21-9 24-7 2-14 1-21 6 4-8 10-7 17-9 10-3 15-11 13-21z" fill="url(#swirlGreen)" />
        </svg>
        <div className="flex flex-col items-start">
          <span className="text-[21px] leading-[30px] font-bold text-[#74a6de]">极光下载站</span>
          <span className="font-['Liberation_Sans',Arial,sans-serif] text-[16px] leading-[18px] font-bold text-[#7bcb8f]">www.xz7.com</span>
        </div>
      </div>
    </>
  );
}

export default function App() {
  return (
    <div className="relative flex h-screen flex-col overflow-hidden bg-white font-['Noto_Sans','Noto_Sans_CJK_SC',sans-serif] text-[12px] leading-4 text-[#20263a]">
      <TitleBar />
      <MenuBar />
      <Ribbon />
      <div className="flex min-h-0 flex-1 bg-[#f6f7f9]">
        <main className="flex min-w-0 flex-1 flex-col">
          <FormulaBar />
          <div className="flex min-h-0 flex-1">
            <Grid />
            <VScroll />
          </div>
          <SheetTabs />
        </main>
        <Pane />
        <SideBar />
      </div>
      <div className="bg-[#f6f7f9]">
        <StatusBar />
      </div>
      <ImeBar />
    </div>
  );
}
